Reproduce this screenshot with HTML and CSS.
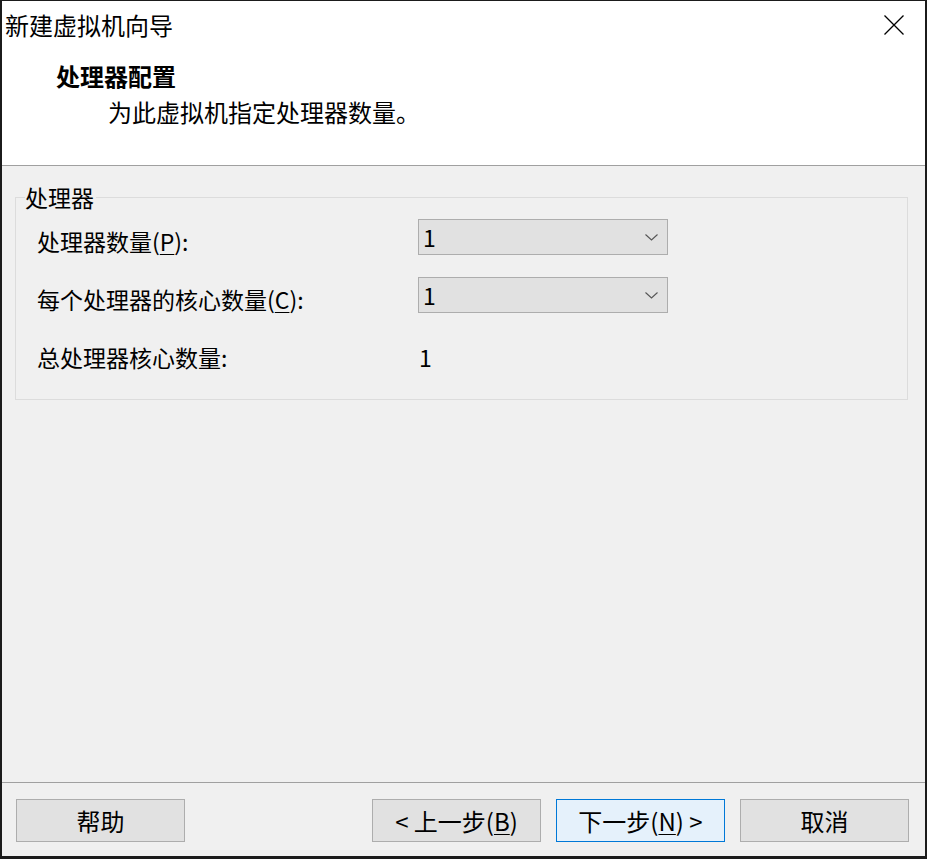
FILE: index.html
```html
<!DOCTYPE html>
<html lang="zh-CN">
<head>
<meta charset="utf-8">
<title>新建虚拟机向导</title>
<link rel="stylesheet" href="styles.css">
</head>
<body>
<div class="window">
  <header class="header">
    <div class="titlebar">
      <span class="title">新建虚拟机向导</span>
      <button class="close" aria-label="关闭">
        <svg width="20" height="20" viewBox="0 0 20 20"><path d="M0.5 0.5 L19.5 19.5 M19.5 0.5 L0.5 19.5" stroke="#000" stroke-width="1.3" fill="none"/></svg>
      </button>
    </div>
    <h1 class="heading">处理器配置</h1>
    <p class="subtitle">为此虚拟机指定处理器数量。</p>
  </header>

  <main class="body">
    <fieldset class="group">
      <legend class="group-title">处理器</legend>
      <div class="form">
        <label class="label">处理器数量(<u>P</u>):</label>
        <div class="combo"><span class="combo-value">1</span>
          <svg class="chevron" width="13" height="7" viewBox="0 0 13 7"><path d="M0.5 0.5 L6.5 6 L12.5 0.5" stroke="#555" stroke-width="1.1" fill="none"/></svg>
        </div>
        <label class="label">每个处理器的核心数量(<u>C</u>):</label>
        <div class="combo"><span class="combo-value">1</span>
          <svg class="chevron" width="13" height="7" viewBox="0 0 13 7"><path d="M0.5 0.5 L6.5 6 L12.5 0.5" stroke="#555" stroke-width="1.1" fill="none"/></svg>
        </div>
        <span class="label">总处理器核心数量:</span>
        <span class="total">1</span>
      </div>
    </fieldset>
  </main>

  <footer class="footer">
    <button class="btn">帮助</button>
    <div class="spacer"></div>
    <button class="btn">&lt; 上一步(<u>B</u>)</button>
    <button class="btn btn-default">下一步(<u>N</u>) &gt;</button>
    <button class="btn">取消</button>
  </footer>
</div>
</body>
</html>
```

FILE: styles.css
```css
html, body {
  margin: 0;
  padding: 0;
  background: #1b1b1b;
}

body {
  font-family: "Noto Sans CJK SC", "Noto Sans", sans-serif;
  color: #000;
}

.window {
  width: 927px;
  height: 859px;
  box-sizing: border-box;
  border: 2px solid #1b1b1b;
  border-top-width: 1px;
  border-bottom-width: 3px;
  background: #f0f0f0;
  display: flex;
  flex-direction: column;
}

/* white header with title bar, heading and description */
.header {
  background: #fff;
  height: 165px;
  box-sizing: border-box;
  border-bottom: 1px solid #a0a0a0;
  flex: none;
}

.titlebar {
  height: 48px;
  display: flex;
  align-items: center;
  justify-content: space-between;
  padding-left: 3px;
}

.title {
  font-size: 24px;
  line-height: 28px;
}

.close {
  border: 0;
  background: none;
  padding: 0;
  margin-right: 21px;
  width: 20px;
  height: 20px;
  display: flex;
}

.heading {
  margin: 12px 0 0 54px;
  font-size: 24px;
  line-height: 30px;
  font-weight: bold;
}

.subtitle {
  margin: 5px 0 0 106px;
  font-size: 24px;
  line-height: 32px;
}

/* main content area */
.body {
  flex: 1;
  padding: 19px 17px 0 13px;
}

.group {
  margin: 0;
  padding: 10px 20px 28px 21px;
  border: 1px solid #dcdcdc;
  min-width: 0;
}

.group-title {
  padding: 0 2px 0 0;
  margin-left: -12px;
  font-size: 23px;
  line-height: 24px;
}

.form {
  display: grid;
  grid-template-columns: 381px 250px;
  grid-auto-rows: 36px;
  row-gap: 22px;
  align-items: center;
}

.label {
  font-size: 23px;
  line-height: 30px;
  padding-top: 8px;
}

.label u, .btn u {
  text-decoration-thickness: 1px;
  text-underline-offset: 3px;
}

.combo {
  height: 36px;
  box-sizing: border-box;
  border: 1px solid #adadad;
  background: #e1e1e1;
  display: flex;
  align-items: center;
  justify-content: space-between;
  padding: 0 9px 0 4px;
}

.combo-value {
  font-size: 23px;
  line-height: 30px;
}

.chevron {
  display: block;
}

.total {
  font-size: 23px;
  line-height: 30px;
  padding: 8px 0 0 1px;
}

/* button row */
.footer {
  flex: none;
  display: flex;
  align-items: flex-start;
  gap: 15px;
  border-top: 1px solid #a0a0a0;
  padding: 16px 16px 14px 14px;
}

.spacer {
  flex: 1;
}

.btn {
  width: 169px;
  height: 43px;
  box-sizing: border-box;
  border: 1px solid #adadad;
  background: #e1e1e1;
  font-family: inherit;
  font-size: 24px;
  line-height: 30px;
  color: #000;
  padding: 0;
}

.btn-default {
  border-color: #0078d7;
  background: #e5f1fb;
}
```
